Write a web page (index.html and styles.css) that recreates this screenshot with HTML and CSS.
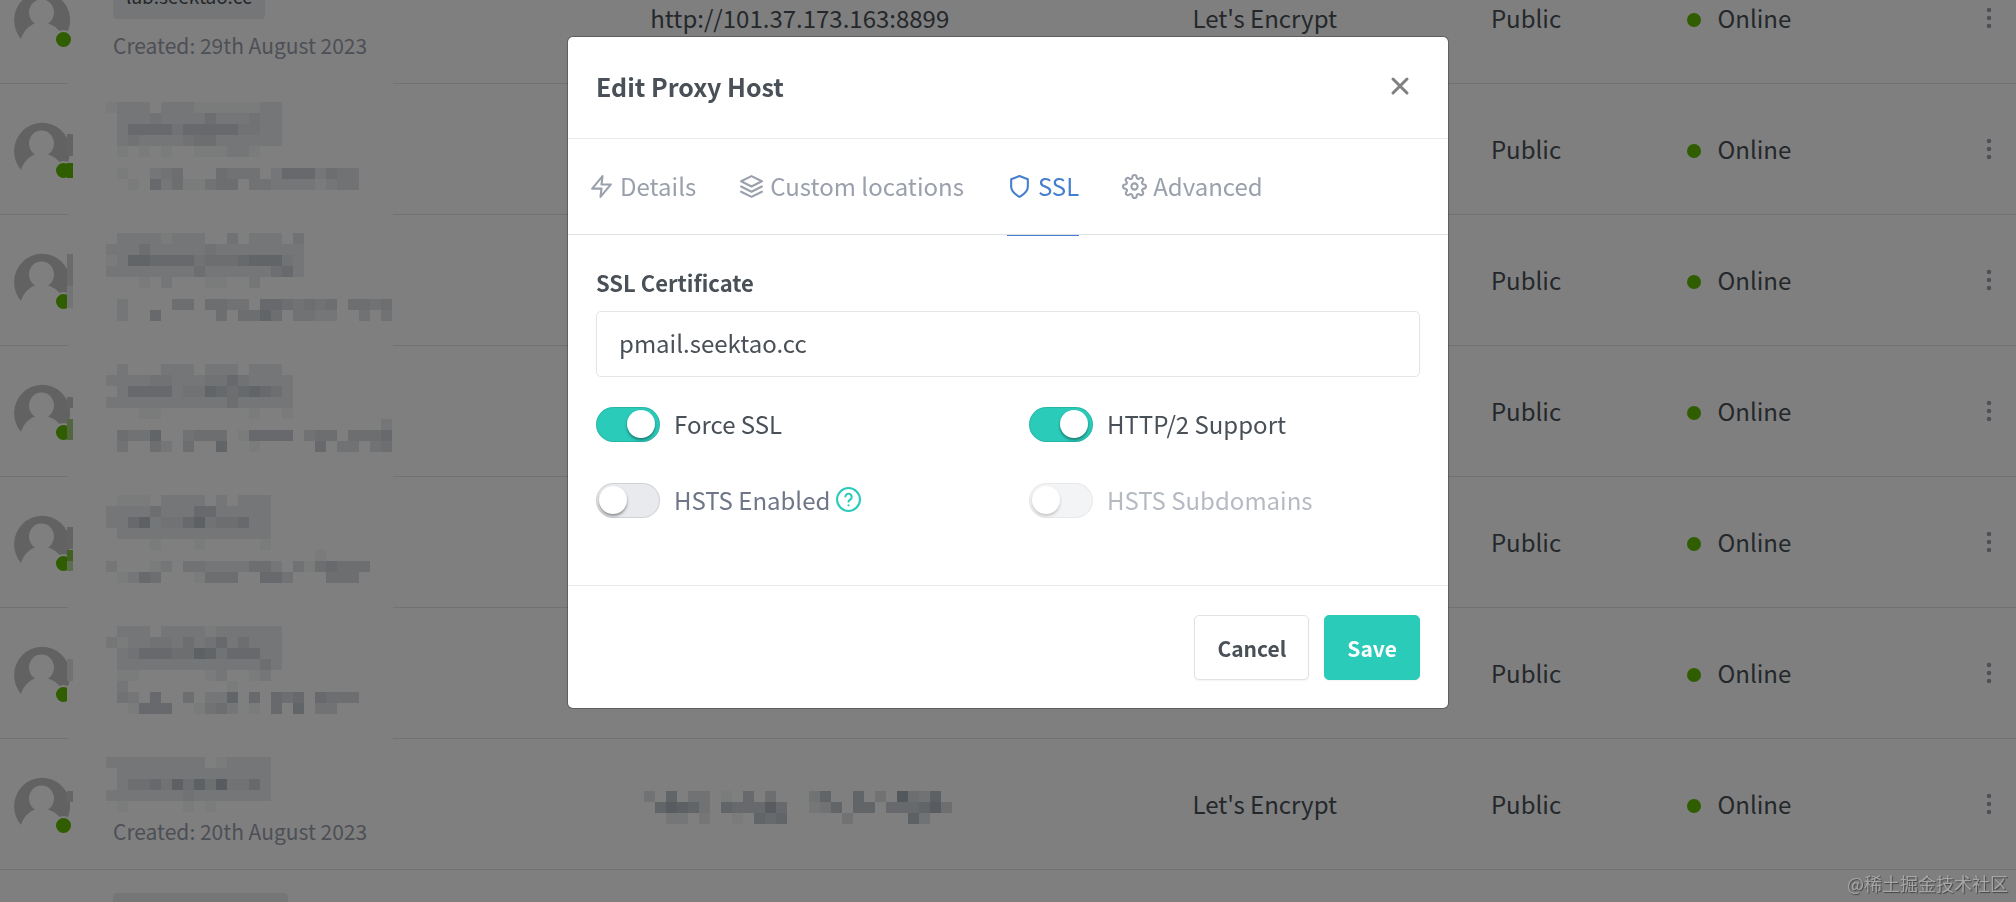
FILE: index.html
```html
<!DOCTYPE html>
<html lang="en">
<head>
<meta charset="utf-8">
<meta name="viewport" content="width=device-width, initial-scale=1">
<title>Edit Proxy Host</title>
<link rel="stylesheet" href="styles.css">
</head>
<body>
<svg class="sprite" aria-hidden="true">
  <symbol id="person" viewBox="0 0 60 60">
    <path fill="#c4c4c4" d="M9 51A28 28.500 0 1 1 52 50C49 43 43 37.500 36 35.500A12.500 13 0 1 0 23 35.500C16 38 11 44 9 51Z"/>
  </symbol>
  <symbol id="more" viewBox="0 0 24 24">
    <circle cx="12" cy="4" r="2.300"/><circle cx="12" cy="12" r="2.300"/><circle cx="12" cy="20" r="2.300"/>
  </symbol>
</svg>

<main class="hosts">
  <table class="host-table">
    <colgroup>
      <col class="col-avatar"><col class="col-name"><col class="col-dest"><col class="col-ssl"><col class="col-access"><col class="col-status"><col class="col-menu">
    </colgroup>
    <tbody id="rows"></tbody>
  </table>
</main>

<div class="backdrop"></div>

<div class="modal" role="dialog" aria-labelledby="modal-title">
  <header class="modal-header">
    <h1 id="modal-title" class="modal-title">Edit Proxy Host</h1>
    <button class="close" type="button" aria-label="Close">
      <svg viewBox="0 0 20 20" width="20" height="20" stroke="#808080" stroke-width="3" stroke-linecap="round"><path d="M3 3L17 17M17 3L3 17"/></svg>
    </button>
  </header>

  <nav class="tabs">
    <a class="tab" href="#details"><svg class="icon" viewBox="0 0 24 24"><path d="M13 2L3 14h9l-1 8 10-12h-9l1-8z"/></svg>Details</a>
    <a class="tab" href="#locations"><svg class="icon" viewBox="0 0 24 24"><path d="M12 2L2 7l10 5 10-5-10-5zM2 17l10 5 10-5M2 12l10 5 10-5"/></svg>Custom locations</a>
    <a class="tab active" href="#ssl"><svg class="icon" viewBox="0 0 24 24"><path d="M12 22s8-4 8-10V5l-8-3-8 3v7c0 6 8 10 8 10z"/></svg>SSL</a>
    <a class="tab" href="#advanced"><svg class="icon" viewBox="0 0 24 24"><circle cx="12" cy="12" r="3"/><path d="M19.400 15a1.650 1.650 0 0 0 .33 1.820l.06.06a2 2 0 1 1-2.830 2.830l-.06-.06a1.650 1.650 0 0 0-1.820-.33 1.650 1.650 0 0 0-1 1.510V21a2 2 0 0 1-4 0v-.09A1.650 1.650 0 0 0 9 19.400a1.650 1.650 0 0 0-1.820.33l-.06.06a2 2 0 1 1-2.830-2.830l.06-.06a1.650 1.650 0 0 0 .33-1.820 1.650 1.650 0 0 0-1.510-1H3a2 2 0 0 1 0-4h.09A1.650 1.650 0 0 0 4.600 9a1.650 1.650 0 0 0-.33-1.820l-.06-.06a2 2 0 1 1 2.830-2.830l.06.06a1.650 1.650 0 0 0 1.820.33H9a1.650 1.650 0 0 0 1-1.510V3a2 2 0 0 1 4 0v.09a1.650 1.650 0 0 0 1 1.510 1.650 1.650 0 0 0 1.820-.33l.06-.06a2 2 0 1 1 2.830 2.830l-.06.06a1.650 1.650 0 0 0-.33 1.820V9a1.650 1.650 0 0 0 1.510 1H21a2 2 0 0 1 0 4h-.09a1.650 1.650 0 0 0-1.510 1z"/></svg>Advanced</a>
  </nav>

  <form class="modal-body">
    <label class="field-label" for="certificate">SSL Certificate</label>
    <select class="select" id="certificate"><option>pmail.seektao.cc</option></select>
    <div class="switches">
      <label class="switch"><input type="checkbox" checked><span>Force SSL</span></label>
      <label class="switch"><input type="checkbox" checked><span>HTTP/2 Support</span></label>
      <label class="switch"><input type="checkbox"><span>HSTS Enabled</span>
        <svg class="help" viewBox="0 0 24 24"><circle cx="12" cy="12" r="11"/><path d="M9 9a3 3 0 0 1 6 1c0 2-3 2.500-3 4M12 17.500v.1"/></svg>
      </label>
      <label class="switch disabled"><input type="checkbox" disabled><span>HSTS Subdomains</span></label>
    </div>
  </form>

  <footer class="modal-footer">
    <button class="btn" type="button">Cancel</button>
    <button class="btn btn-save" type="button">Save</button>
  </footer>
</div>

<div class="watermark">@稀土掘金技术社区</div>
<script src="hosts.js"></script>
</body>
</html>
```
FILE: styles.css
```css
* { box-sizing: border-box; }

body {
  margin: 0;
  background: #fff;
  color: #495057;
  font: 24px/32px "Noto Sans CJK SC", "Noto Sans", sans-serif;
}

.sprite { display: none; }

/* Host list, scrolled part of the way through its first row */
.hosts { height: 100vh; overflow: hidden; }

.host-table {
  width: 100%;
  margin-top: -47px;
  table-layout: fixed;
  border-collapse: separate;
  border-spacing: 0;
}

.col-avatar { width: 98px; }
.col-name { width: 26.6%; }
.col-dest { width: 26.9%; }
.col-ssl { width: 14.8%; }
.col-access { width: 9.7%; }
.col-menu { width: 54px; }

.host-table td {
  position: relative;
  height: 131px;
  padding: 0 0 0 16px;
  border-bottom: 1px solid #e2e4e6;
  white-space: nowrap;
}

.host-table .cell-avatar { padding-left: 12px; }
.host-table .cell-name { padding-left: 15px; }
.host-table .cell-menu { padding: 0; }

.avatar { position: relative; width: 60px; height: 60px; }
.avatar svg { display: block; }
.avatar .state {
  position: absolute;
  right: -1px;
  bottom: -1px;
  width: 19px;
  height: 19px;
  border: 2px solid #fff;
  border-radius: 50%;
  background: #5eba00;
}
.sliver { position: absolute; left: 67px; width: 6px; }

.tag {
  display: block;
  width: fit-content;
  height: 43px;
  padding: 0 13px;
  border-radius: 4px;
  background: #e9ecef;
  font-size: 19px;
  line-height: 40px;
}
.created { color: #9aa0ac; font-size: 21px; line-height: 32px; margin-top: 10px; }
.spacer { visibility: hidden; }

.mosaic { position: absolute; left: 8px; top: 18px; }
.mosaic-dest { top: 52px; left: 10px; }

/* Redacted band that also hides the row line */
.band::after {
  content: "";
  position: absolute;
  left: -30px;
  bottom: -1px;
  width: 325px;
  height: 1px;
  background: #fff;
}

.dot {
  display: inline-block;
  width: 14px;
  height: 14px;
  margin: 0 16px 0 1px;
  border-radius: 50%;
  background: #5eba00;
  vertical-align: 1px;
}

.menu {
  display: block;
  width: 54px;
  height: 32px;
  padding: 0;
  border: 0;
  background: none;
}
.menu svg { display: block; margin: auto; fill: #9aa0ac; }

.backdrop { position: fixed; inset: 0; background: rgba(0, 0, 0, .5); }

.modal {
  position: fixed;
  top: 37px;
  left: 50%;
  width: 880px;
  max-width: 100%;
  transform: translateX(-50%);
  border-radius: 5px;
  background: #fff;
  box-shadow: 0 0 0 1px rgba(0, 0, 0, .25);
}

.modal-header {
  display: flex;
  align-items: center;
  justify-content: space-between;
  height: 102px;
  padding: 0 28px 3px;
  border-bottom: 1px solid #e9ecef;
}
.modal-title { margin: 0; font-size: 25px; line-height: 36px; font-weight: 700; }

.close { width: 40px; height: 40px; padding: 10px; border: 0; background: none; }
.close svg { display: block; }

.tabs {
  display: flex;
  gap: 43px;
  height: 96px;
  padding: 0 21px;
  border-bottom: 1px solid #dee2e6;
}
.tab {
  display: flex;
  align-items: center;
  gap: 6px;
  height: 97px;
  padding-bottom: 2px;
  border-bottom: 1px solid transparent;
  color: #9aa0ac;
  text-decoration: none;
}
.tab.active { color: #467fcf; border-color: #467fcf; }

.icon, .help {
  width: 25px;
  height: 25px;
  fill: none;
  stroke: currentColor;
  stroke-width: 2;
  stroke-linecap: round;
  stroke-linejoin: round;
}

.modal-body { padding: 31px 28px 67px; }

.field-label { display: block; margin-bottom: 13px; font-size: 22px; font-weight: 700; }

.select {
  display: block;
  width: 100%;
  height: 66px;
  padding: 0 22px 2px;
  appearance: none;
  border: 1px solid #e3e5e8;
  border-radius: 5px;
  background: #fff;
  color: inherit;
  font: inherit;
}

.switches {
  display: grid;
  grid-template-columns: 433px 1fr;
  row-gap: 41px;
  margin-top: 30px;
}
.switch { display: flex; align-items: center; height: 35px; }
.switch span { padding-bottom: 2px; }
.switch input {
  appearance: none;
  width: 64px;
  height: 35px;
  margin: 0 14px 0 0;
  padding: 2px;
  border: 1px solid rgba(0, 0, 0, .1);
  border-radius: 18px;
  background: #e9eaee;
}
.switch input::before {
  content: "";
  display: block;
  width: 28px;
  height: 28px;
  border-radius: 50%;
  background: #fff;
  box-shadow: 0 2px 3px rgba(0, 0, 0, .4);
}
.switch input:checked { background: #2bcbba; }
.switch input:checked::before { margin-left: 28px; }
.switch input:not(:checked) + span { color: #6e7687; }
.switch.disabled { opacity: .5; }
.help { margin-left: 6px; margin-bottom: 3px; color: #2bcbba; }

.modal-footer {
  display: flex;
  justify-content: flex-end;
  gap: 15px;
  padding: 29px 28px 28px;
  border-top: 1px solid #e9ecef;
}
.btn {
  height: 65px;
  padding: 0 22px;
  border: 1px solid #e0e3e6;
  border-radius: 5px;
  background: #fff;
  box-shadow: 0 1px 2px rgba(0, 0, 0, .05);
  color: #495057;
  font: inherit;
  font-size: 21px;
  font-weight: 700;
}
.btn-save { border-color: #2bcbba; background: #2bcbba; color: #fff; }

.watermark {
  position: fixed;
  right: 8px;
  bottom: 5px;
  color: #a6a6a6;
  font-size: 18px;
  line-height: 28px;
  text-shadow: 1px 1px 1px #444;
}
```
FILE: hosts.js
```js
// Each mosaic line is a run of 11px cells, one digit of darkness per cell.
const CELL = 11;

const hosts = [
  { tag: "lab.seektao.cc", created: "Created: 29th August 2023", dest: "http://101.37.173.163:8899", band: true },
  { band: true, slivers: [[50, 22, "#c8c8c8"], [79, 15, "#5eba00"]], mosaic: [
    "1222022211111122", "0222322224222322", "0255553555553322", "0232222344222222", "0101010011122100", "",
    "01002340004333025552433", "00105241134403322221233"] },
  { band: true, slivers: [[39, 32, "#d4d6d8"], [71, 22, "#e4e8ea"]], mosaic: [
    "022221222003022203", "222422222322222222", "126655553444566632", "222222224222222452", "00010200011002", "",
    "02000044044330554343404434", "02005000004044640332200303"] },
  { band: true, slivers: [[51, 11, "#c8c8c8"], [73, 21, "#a4cc80"]], mosaic: [
    "0200022202220222", "22223322233532222", "02555523365456542", "22222222222422222", "00011000000001001", "00000000000000000000000002",
    "04336003444015555034404445", "03004204006001000005033034"] },
  { band: true, slivers: [[50, 22, "#c8c8c8"], [73, 11, "#84c040"], [84, 10, "#b8dca0"]], mosaic: [
    "011102222020222", "222242225522222", "225723357344522", "022222222222222", "000010001000001", "0000000000000000000100",
    "200012033222244203145444", "012540001444005530004440"] },
  { band: true, slivers: [[51, 22, "#e4e4e4"], [78, 22, "#ffffff"]], mosaic: [
    "0222022221222222", "2122332423524222", "0235554476355522", "0222222222222242", "011000000120012", "020000000001",
    "03205004022605054505444", "001555001342010506033"] },
  { created: "Created: 20th August 2023", slivers: [[52, 11, "#cccccc"]], mosaic: [
    "222222222012222", "022222222222222", "024453747483352", "222222232222222", "0100000101"],
    destMosaic: ["3060330105040003600603094370", "0687630655585002360660555684", "0022020010656000003000007300"] },
  { tag: "pmail.seektao.cc" }
];

function mosaic(lines, cls) {
  const width = Math.max(...lines.map(l => l.length)) * CELL;
  const cells = lines.flatMap((line, y) => [...line].map((d, x) => d === "0" ? "" :
    `<rect x="${x * CELL}" y="${y * CELL}" width="${CELL}" height="${CELL}" fill-opacity="${d * 0.05}"/>`)).join("");
  return `<svg class="mosaic ${cls}" width="${width}" height="${lines.length * CELL}" fill="#3c5062" shape-rendering="crispEdges" aria-hidden="true">${cells}</svg>`;
}

document.getElementById("rows").innerHTML = hosts.map(h => `
  <tr>
    <td class="cell-avatar">
      <div class="avatar"><svg width="60" height="60"><use href="#person"/></svg><span class="state"></span></div>
      ${(h.slivers || []).map(([y, height, color]) => `<i class="sliver" style="top:${y}px;height:${height}px;background:${color}"></i>`).join("")}
    </td>
    <td class="cell-name ${h.band ? "band" : ""}">
      ${h.tag ? `<span class="tag">${h.tag}</span>` : `<span class="tag spacer"></span>`}
      <div class="created">${h.created || "&nbsp;"}</div>
      ${h.mosaic ? mosaic(h.mosaic, "") : ""}
    </td>
    <td>${h.dest || ""}${h.destMosaic ? mosaic(h.destMosaic, "mosaic-dest") : ""}</td>
    <td>Let's Encrypt</td>
    <td>Public</td>
    <td><span class="dot"></span>Online</td>
    <td class="cell-menu"><button class="menu" type="button" aria-label="Actions"><svg width="24" height="24"><use href="#more"/></svg></button></td>
  </tr>`).join("");
```
